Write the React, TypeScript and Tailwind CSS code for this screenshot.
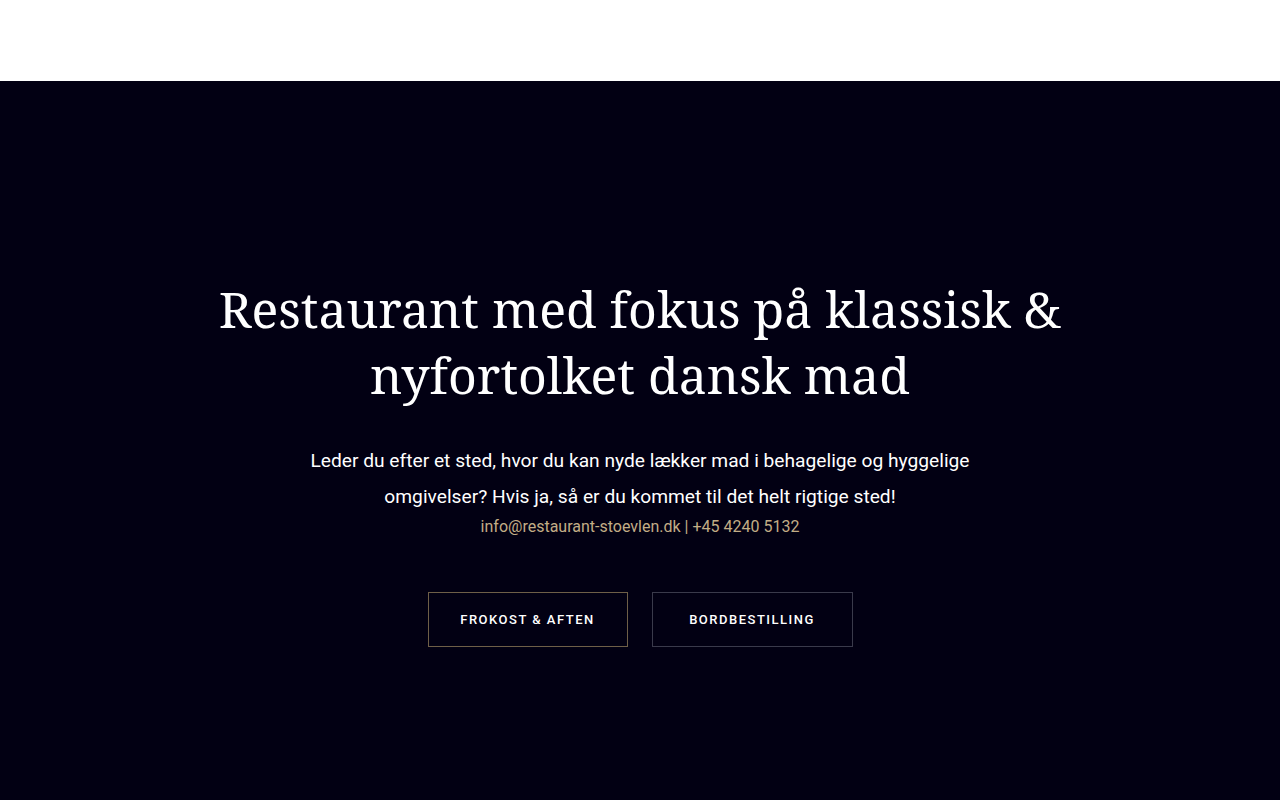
// hero page
import type { FC } from "react";

const App: FC = () => {
  return (
    <div className="min-h-[800px] w-full flex flex-col bg-white">
      {/* top bar */}
      <header className="h-[81px] w-full bg-white"></header>

      {/* hero */}
      <section className="h-[719px] w-full bg-[#020013] flex flex-col items-center pt-[195px] text-center">
        <h1 className="text-[50px] leading-[66px] text-white font-['Noto_Serif','DejaVu_Serif',serif] max-w-[880px]">
          Restaurant med fokus på klassisk &amp; nyfortolket dansk mad
        </h1>
        <p className="mt-[35px] max-w-[700px] text-[19.2px] leading-[36px] text-white font-['Roboto',sans-serif]">
          Leder du efter et sted, hvor du kan nyde lækker mad i behagelige og hyggelige omgivelser? Hvis ja, så er du kommet til det helt rigtige sted!
        </p>
        <p className="mt-0 text-[16px] leading-[24px] text-[#c2ad86] font-['Roboto',sans-serif]">
          info@restaurant-stoevlen.dk | +45 4240 5132
        </p>

        {/* buttons */}
        <div className="mt-[53px] flex gap-[24px]">
          <a className="w-[200px] h-[55px] flex items-center justify-center border border-[#6e5f48] text-[13px] font-medium tracking-[1.5px] text-white font-['Roboto',sans-serif]">
            FROKOST &amp; AFTEN
          </a>
          <a className="w-[201px] h-[55px] flex items-center justify-center border border-[#3a3a4b] text-[13px] font-medium tracking-[1.5px] text-white font-['Roboto',sans-serif]">
            BORDBESTILLING
          </a>
        </div>
      </section>
    </div>
  );
};

export default App;
